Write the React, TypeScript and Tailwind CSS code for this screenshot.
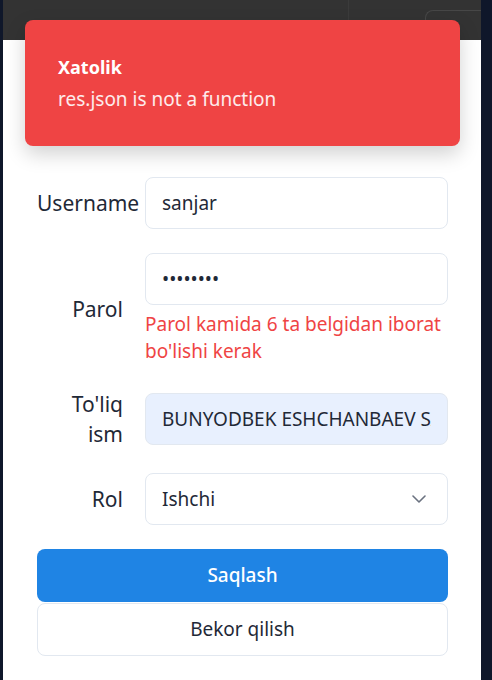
import React from 'react';

const font = { fontFamily: '"Noto Sans", "Open Sans", sans-serif' };

function Row({ label, children }: { label: React.ReactNode; children: React.ReactNode }) {
  return (
    <div className="flex items-center gap-[22px] mb-6">
      <label className="w-[86px] shrink-0 text-right text-[21px] leading-[30px] text-[#1f2937]">{label}</label>
      <div className="flex-1 min-w-0">{children}</div>
    </div>
  );
}

const inputCls =
  'w-full h-[52px] rounded-lg border border-[#e2e8f0] px-4 text-[19px] text-[#1f2937] outline-none bg-white';

export default function App() {
  return (
    <div className="h-[680px] w-full bg-[#0f172a] flex overflow-hidden" style={font}>
      <div className="ml-[3px] w-[478px] bg-white relative flex flex-col">
        <header className="h-[40px] shrink-0 bg-[#333333] relative flex">
          <div className="ml-[345px] w-px h-full bg-[#3b3b3b]" />
          <div className="ml-auto mt-[10px] w-[56px] h-[40px] rounded-tl-lg border-l border-t border-[#474747]" />
        </header>

        <div className="absolute top-[20px] left-[22px] w-[435px] h-[126px] rounded-lg bg-[#ef4444] shadow-[0_8px_20px_rgba(0,0,0,0.18)] flex flex-col justify-center gap-2 px-[33px]">
          <div className="text-white font-bold text-[18px] leading-6">Xatolik</div>
          <div className="text-white/90 text-[19px] leading-6">res.json is not a function</div>
        </div>

        <form className="pt-[137px] pl-[34px] pr-[33px]">
          <Row label="Username">
            <input className={inputCls} readOnly defaultValue="sanjar" />
          </Row>
          <Row label="Parol">
            <input className={inputCls} type="password" readOnly defaultValue="12345678" />
            <div className="mt-[6px] text-[19px] leading-[27px] text-[#ef4444]">
              Parol kamida 6 ta belgidan iborat bo'lishi kerak
            </div>
          </Row>
          <Row label={<>To'liq<br />ism</>}>
            <input
              className={inputCls + ' !bg-[#e8f0fe]'}
              readOnly
              defaultValue="BUNYODBEK ESHCHANBAEV SANJAROVICH"
            />
          </Row>
          <Row label="Rol">
            <div className="w-full h-[52px] rounded-lg border border-[#e2e8f0] px-4 flex items-center justify-between text-[19px] text-[#1f2937]">
              <span>Ishchi</span>
              <svg width="14" height="8" viewBox="0 0 14 8" fill="none" className="mr-[5px]">
                <path d="M1 1l6 6 6-6" stroke="#6b7280" strokeWidth="1.6" strokeLinecap="round" strokeLinejoin="round" />
              </svg>
            </div>
          </Row>
          <button
            type="button"
            className="w-full h-[53px] rounded-lg bg-[#1f84e4] text-white text-[19px] font-medium"
          >
            Saqlash
          </button>
          <button
            type="button"
            className="mt-[1px] w-full h-[53px] rounded-lg border border-[#e2e8f0] bg-white text-[#1f2937] text-[19px]"
          >
            Bekor qilish
          </button>
        </form>
      </div>
    </div>
  );
}
